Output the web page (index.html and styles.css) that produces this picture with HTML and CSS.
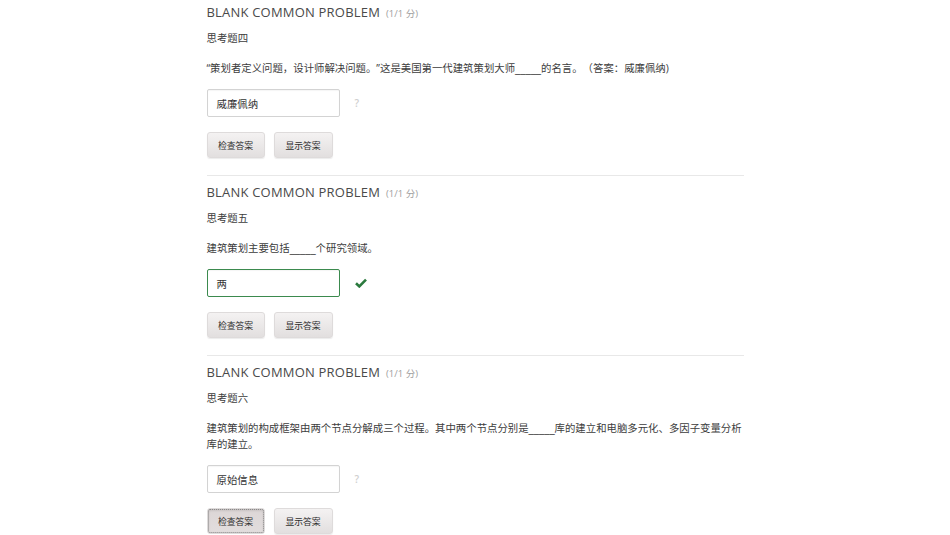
FILE: index.html
```html
<!DOCTYPE html>
<html lang="zh-CN">
<head>
<meta charset="utf-8">
<title>Blank Common Problem</title>
<link rel="stylesheet" href="styles.css">
</head>
<body>
<main class="course">
  <section class="problem">
    <h2 class="problem-title">BLANK COMMON PROBLEM<span class="score">(1/1 分)</span></h2>
    <p class="problem-name">思考题四</p>
    <p class="problem-text">“策划者定义问题，设计师解决问题。”这是美国第一代建筑策划大师<span class="blank">_____</span>的名言。（答案：威廉佩纳)</p>
    <div class="answer-row">
      <div class="answer-input">威廉佩纳</div>
      <span class="status unanswered">?</span>
    </div>
    <div class="actions">
      <button class="btn">检查答案</button>
      <button class="btn">显示答案</button>
    </div>
  </section>
  <section class="problem">
    <h2 class="problem-title">BLANK COMMON PROBLEM<span class="score">(1/1 分)</span></h2>
    <p class="problem-name">思考题五</p>
    <p class="problem-text">建筑策划主要包括<span class="blank">_____</span>个研究领域。</p>
    <div class="answer-row">
      <div class="answer-input correct">两</div>
      <span class="status">
        <svg class="check" width="12" height="10" viewBox="0 0 12 10"><path d="M1 5.2 L4.3 8.4 L11 1.6" fill="none" stroke="#2b7a3e" stroke-width="2.6" stroke-linejoin="miter"/></svg>
      </span>
    </div>
    <div class="actions">
      <button class="btn">检查答案</button>
      <button class="btn">显示答案</button>
    </div>
  </section>
  <section class="problem last">
    <h2 class="problem-title">BLANK COMMON PROBLEM<span class="score">(1/1 分)</span></h2>
    <p class="problem-name">思考题六</p>
    <p class="problem-text">建筑策划的构成框架由两个节点分解成三个过程。其中两个节点分别是<span class="blank">_____</span>库的建立和电脑多元化、多因子变量分析<br>库的建立。</p>
    <div class="answer-row">
      <div class="answer-input">原始信息</div>
      <span class="status unanswered">?</span>
    </div>
    <div class="actions">
      <button class="btn is-focused">检查答案</button>
      <button class="btn">显示答案</button>
    </div>
  </section>
</main>
</body>
</html>
```
FILE: styles.css
```css
html, body {
  margin: 0;
  padding: 0;
  background: #ffffff;
}

body {
  font-family: "Open Sans", "Noto Sans CJK SC", sans-serif;
  color: #3c3c3c;
  text-spacing-trim: space-all;
}

.course {
  width: 537px;
  margin: -4px auto 0;
}

.problem {
  padding: 7px 0 17px;
  border-bottom: 1px solid #e8e8e8;
}

.problem.last {
  border-bottom: none;
}

.problem-title {
  margin: 0;
  font-size: 13px;
  line-height: 18px;
  font-weight: 400;
  color: #4a4a4a;
  letter-spacing: 0.2px;
}

.score {
  margin-left: 6px;
  font-size: 9.5px;
  color: #a0a0a0;
  letter-spacing: 0;
}

.problem-name {
  margin: 7px 0 0;
  font-size: 10.4px;
  line-height: 16px;
}

.problem-text {
  margin: 14px 0 0;
  font-size: 10.4px;
  line-height: 16px;
  white-space: nowrap;
}

.blank {
  font-family: "DejaVu Sans", sans-serif;
}

.answer-row {
  display: flex;
  align-items: center;
  margin-top: 13px;
}

.answer-input {
  box-sizing: border-box;
  width: 133px;
  height: 28px;
  padding: 0 9px;
  display: flex;
  align-items: center;
  font-size: 10.4px;
  color: #333;
  background: #fff;
  border: 1px solid #d3d3d3;
  border-radius: 2px;
  box-shadow: inset 0 1px 1px rgba(0, 0, 0, 0.04);
}

.answer-input.correct {
  border-color: #3b8a4e;
}

.status {
  margin-left: 15px;
  font-size: 10px;
  display: flex;
  align-items: center;
}

.status.unanswered {
  color: #cfcfcf;
  font-weight: 600;
}

.actions {
  display: flex;
  gap: 9px;
  margin-top: 15px;
}

.btn {
  box-sizing: border-box;
  height: 26px;
  width: 58px;
  padding: 0;
  font-family: inherit;
  font-size: 8.8px;
  color: #2e2e2e;
  background: linear-gradient(#f4f2f2, #e2dfdf);
  border: 1px solid #dedbdb;
  border-radius: 3px;
  box-shadow: 0 1px 1px rgba(0, 0, 0, 0.08);
}

.btn + .btn {
  width: 59px;
}

.btn.is-focused {
  background: linear-gradient(#dcd6d6, #e2dddd);
  outline: 1px dotted #8a8a8a;
  outline-offset: -2px;
  box-shadow: inset 0 1px 3px rgba(0, 0, 0, 0.18);
}
```
